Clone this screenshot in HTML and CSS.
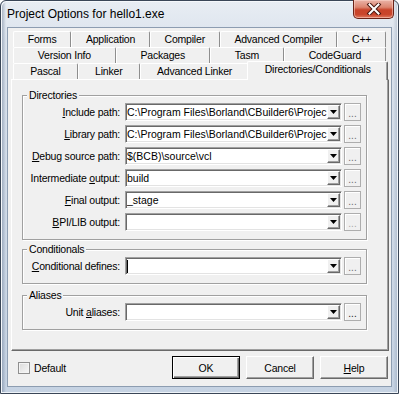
FILE: index.html
```html
<!DOCTYPE html>
<html lang="en">
<head>
  <meta charset="UTF-8">
  <title>Project Options for hello1.exe</title>
  <link rel="stylesheet" href="styles.css">
</head>
<body>
  <div class="window">
    <div class="titlebar">
      <span class="title">Project Options for hello1.exe</span>
      <button class="close-btn">
        <svg width="16" height="12" viewBox="0 0 16 12">
          <path d="M3.5 1.5 L12.5 10.5 M12.5 1.5 L3.5 10.5" stroke="#4a1810" stroke-width="4" stroke-linecap="square"/>
          <path d="M3.5 1.5 L12.5 10.5 M12.5 1.5 L3.5 10.5" stroke="#fff" stroke-width="2" stroke-linecap="square"/>
        </svg>
      </button>
    </div>

    <div class="client">
      <!-- tab strip, three rows -->
      <div class="tabs">
        <div class="tab-row">
          <div class="tab">Forms</div>
          <div class="tab">Application</div>
          <div class="tab">Compiler</div>
          <div class="tab">Advanced Compiler</div>
          <div class="tab">C++</div>
        </div>
        <div class="tab-row">
          <div class="tab">Version Info</div>
          <div class="tab">Packages</div>
          <div class="tab">Tasm</div>
          <div class="tab">CodeGuard</div>
        </div>
        <div class="tab-row">
          <div class="tab">Pascal</div>
          <div class="tab">Linker</div>
          <div class="tab">Advanced Linker</div>
          <div class="tab active">Directories/Conditionals</div>
        </div>
      </div>

      <div class="page">
        <fieldset class="group">
          <legend>Directories</legend>
          <div class="field">
            <label><u>I</u>nclude path:</label>
            <div class="combo"><span class="combo-text">C:\Program Files\Borland\CBuilder6\Projec</span><span class="combo-btn"><svg width="7" height="4" viewBox="0 0 7 4"><polygon points="0,0 7,0 3.5,4" fill="#000"/></svg></span></div>
            <button class="dots">...</button>
          </div>
          <div class="field">
            <label><u>L</u>ibrary path:</label>
            <div class="combo"><span class="combo-text">C:\Program Files\Borland\CBuilder6\Projec</span><span class="combo-btn"><svg width="7" height="4" viewBox="0 0 7 4"><polygon points="0,0 7,0 3.5,4" fill="#000"/></svg></span></div>
            <button class="dots">...</button>
          </div>
          <div class="field">
            <label><u>D</u>ebug source path:</label>
            <div class="combo"><span class="combo-text">$(BCB)\source\vcl</span><span class="combo-btn"><svg width="7" height="4" viewBox="0 0 7 4"><polygon points="0,0 7,0 3.5,4" fill="#000"/></svg></span></div>
            <button class="dots">...</button>
          </div>
          <div class="field">
            <label>Intermediate <u>o</u>utput:</label>
            <div class="combo"><span class="combo-text">build</span><span class="combo-btn"><svg width="7" height="4" viewBox="0 0 7 4"><polygon points="0,0 7,0 3.5,4" fill="#000"/></svg></span></div>
            <button class="dots">...</button>
          </div>
          <div class="field">
            <label><u>F</u>inal output:</label>
            <div class="combo"><span class="combo-text">_stage</span><span class="combo-btn"><svg width="7" height="4" viewBox="0 0 7 4"><polygon points="0,0 7,0 3.5,4" fill="#000"/></svg></span></div>
            <button class="dots">...</button>
          </div>
          <div class="field">
            <label><u>B</u>PI/LIB output:</label>
            <div class="combo"><span class="combo-text"></span><span class="combo-btn"><svg width="7" height="4" viewBox="0 0 7 4"><polygon points="0,0 7,0 3.5,4" fill="#000"/></svg></span></div>
            <button class="dots disabled">...</button>
          </div>
        </fieldset>

        <fieldset class="group group-cond">
          <legend>Conditionals</legend>
          <div class="field">
            <label><u>C</u>onditional defines:</label>
            <div class="combo"><span class="combo-text"><span class="caret"></span></span><span class="combo-btn"><svg width="7" height="4" viewBox="0 0 7 4"><polygon points="0,0 7,0 3.5,4" fill="#000"/></svg></span></div>
            <button class="dots">...</button>
          </div>
        </fieldset>

        <fieldset class="group group-alias">
          <legend>Aliases</legend>
          <div class="field">
            <label>Unit <u>a</u>liases:</label>
            <div class="combo"><span class="combo-text"></span><span class="combo-btn"><svg width="7" height="4" viewBox="0 0 7 4"><polygon points="0,0 7,0 3.5,4" fill="#000"/></svg></span></div>
            <button class="dots dark">...</button>
          </div>
        </fieldset>
      </div>

      <div class="bottom">
        <span class="check"></span>
        <span class="check-label">Default</span>
        <button class="btn btn-default">OK</button>
        <button class="btn">Cancel</button>
        <button class="btn"><u>H</u>elp</button>
      </div>
    </div>
  </div>
</body>
</html>
```

FILE: styles.css
```css
* {
  box-sizing: border-box;
}

body {
  margin: 0;
  background: #fff;
  font-family: "Liberation Sans", Arial, sans-serif;
  font-size: 10.5px;
  letter-spacing: -0.2px;
  color: #000;
}

.window {
  width: 399px;
  height: 394px;
  border: 1px solid #3a4657;
  border-radius: 6px 6px 0 0;
  padding: 0 6px 6px;
  background:
    linear-gradient(to right, rgba(70, 90, 120, 0.45) 0, rgba(70, 90, 120, 0) 5px, rgba(70, 90, 120, 0) 392px, rgba(70, 90, 120, 0.25) 397px),
    linear-gradient(to bottom, #e8edf3 0, #dbe3ed 40px, #c6d3e3 100%);
  box-shadow: inset 1px 1px 0 #f5f8fb, inset -1px -1px 0 #eef3f8;
}

/* title bar */
.titlebar {
  display: flex;
  align-items: flex-start;
  height: 26px;
  margin: 0 -6px;
  padding: 0 4px 0 6px;
}

.title {
  margin-top: 6px;
  font-size: 12px;
  letter-spacing: 0;
  line-height: 14px;
}

.close-btn {
  margin-left: auto;
  margin-top: -1px;
  width: 41px;
  height: 19px;
  padding: 0;
  border: 1px solid #6a2217;
  border-top: none;
  border-radius: 0 0 5px 5px;
  background: linear-gradient(to bottom, #eab4a8 0, #dc8570 40%, #c8432a 55%, #c9452b 80%, #df7a5f 100%);
  box-shadow: inset 0 0 0 1px rgba(255, 220, 210, 0.5);
  display: flex;
  align-items: center;
  justify-content: center;
}

/* client area */
.client {
  height: 360px;
  border: 1px solid #8d9db1;
  background: #f0f0f0;
  padding: 3px 2px 0 3px;
}

.tabs {
  margin: 0 3px 0 2px;
}

.tab-row {
  display: flex;
  height: 16px;
}

.tab {
  flex: 1 1 auto;
  text-align: center;
  white-space: nowrap;
  line-height: 15px;
  background: #f0f0f0;
  border-top: 1px solid #fff;
  border-left: 1px solid #fff;
  border-right: 1px solid #8e8e8e;
  border-radius: 2px 2px 0 0;
}

.tab.active {
  position: relative;
  z-index: 1;
  height: 19px;
  margin: -2px -2px 0;
  border-right-color: #696969;
  box-shadow: inset -1px 0 0 #a0a0a0;
}

.page {
  height: 272px;
  border: 1px solid;
  border-color: #fff #696969 #696969 #fff;
  box-shadow: inset -1px -1px 0 #a0a0a0;
  padding: 9px 0 0 10px;
}

/* group boxes */
.group {
  width: 345px;
  margin: 0;
  padding: 1px 4px 8px 0;
  border: 1px solid #a0a0a0;
  box-shadow: 1px 1px 0 #fff, inset 1px 1px 0 #fff;
}

.group legend {
  position: relative;
  margin-left: 4px;
  padding: 0 2px;
  line-height: 13px;
  background: #f0f0f0;
}

.group-cond {
  margin-top: 3px;
}

.group-alias {
  margin-top: 5px;
}

.field {
  display: flex;
  align-items: center;
  height: 18px;
}

.field + .field {
  margin-top: 4px;
}

.field label {
  width: 97px;
  margin-right: 5px;
  text-align: right;
  white-space: nowrap;
}

.combo {
  display: flex;
  align-items: center;
  width: 217px;
  height: 18px;
  margin-right: 2px;
  padding-left: 1px;
  background: #fff;
  border: 1px solid;
  border-color: #a0a0a0 #fff #fff #a0a0a0;
  box-shadow: inset 1px 1px 0 #696969, inset -1px -1px 0 #e3e3e3;
}

.combo-text {
  flex: 1;
  overflow: hidden;
  white-space: nowrap;
  letter-spacing: 0;
  line-height: 14px;
}

.caret {
  display: inline-block;
  width: 1px;
  height: 13px;
  vertical-align: middle;
  background: #000;
}

.combo-btn {
  flex: none;
  width: 13px;
  height: 14px;
  margin-right: 1px;
  display: flex;
  align-items: center;
  justify-content: center;
  background: #f0f0f0;
  border: 1px solid;
  border-color: #fff #696969 #696969 #fff;
  box-shadow: inset -1px -1px 0 #a0a0a0;
}

.dots {
  width: 17px;
  height: 18px;
  padding: 3px 0 0;
  font-family: inherit;
  font-size: 10px;
  letter-spacing: 0;
  color: #6d6d6d;
  background: #f0f0f0;
  border: 1px solid #adadad;
  box-shadow: inset 1px 1px 0 #fff;
}

.dots.disabled {
  color: #a8a8a8;
}

.dots.dark {
  color: #222;
}

/* bottom buttons */
.bottom {
  display: flex;
  align-items: center;
  height: 23px;
  margin-top: 5px;
  padding: 0 1px 0 7px;
}

.check {
  width: 12px;
  height: 12px;
  border: 1px solid #8f8f8f;
  background: linear-gradient(135deg, #dadada, #f7f7f7);
  box-shadow: inset 0 0 0 1px #f4f4f4;
}

.check-label {
  margin-left: 4px;
}

.btn {
  width: 68px;
  height: 23px;
  padding: 0;
  font-family: inherit;
  font-size: 10.5px;
  letter-spacing: -0.2px;
  color: #000;
  background: #f0f0f0;
  border: 1px solid;
  border-color: #fff #696969 #696969 #fff;
  box-shadow: inset -1px -1px 0 #a0a0a0;
}

.btn + .btn {
  margin-left: 6px;
}

.btn-default {
  margin-left: auto;
  border-color: #000;
  box-shadow: inset 1px 1px 0 #fff, inset -1px -1px 0 #696969, inset -2px -2px 0 #a0a0a0;
}
```
